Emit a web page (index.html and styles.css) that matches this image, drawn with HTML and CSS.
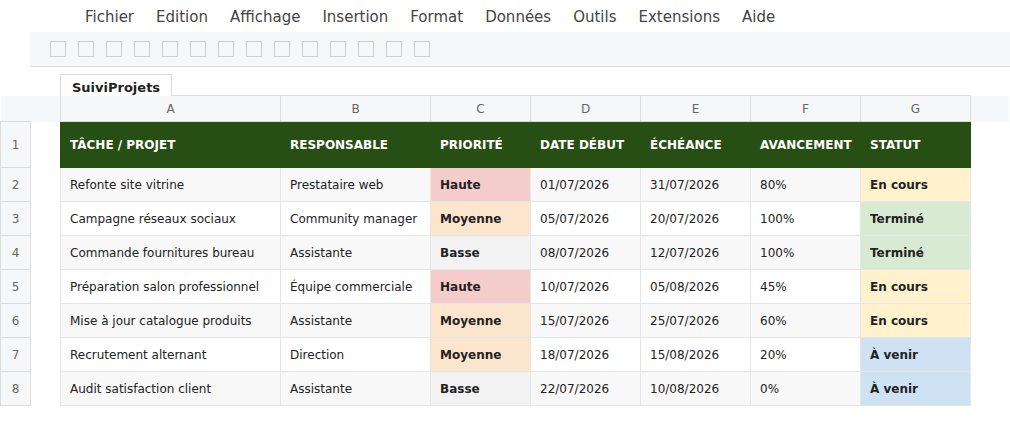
FILE: index.html
```html
<!DOCTYPE html>
<html lang="fr">
<head>
    <meta charset="UTF-8">
    <title>SuiviProjets</title>
    <link rel="stylesheet" href="styles.css">
</head>
<body>
    <div class="menubar">
        <span>Fichier</span>
        <span>Edition</span>
        <span>Affichage</span>
        <span>Insertion</span>
        <span>Format</span>
        <span>Données</span>
        <span>Outils</span>
        <span>Extensions</span>
        <span>Aide</span>
    </div>

    <div class="toolbar">
        <span class="tool"></span><span class="tool"></span><span class="tool"></span><span class="tool"></span>
        <span class="tool"></span><span class="tool"></span><span class="tool"></span><span class="tool"></span>
        <span class="tool"></span><span class="tool"></span><span class="tool"></span><span class="tool"></span>
        <span class="tool"></span><span class="tool"></span>
    </div>

    <div class="tabs">
        <div class="tab">SuiviProjets</div>
    </div>

    <table class="sheet">
        <colgroup>
            <col class="c-rowhead">
            <col class="c-gap">
            <col class="c-a">
            <col class="c-b">
            <col class="c-c">
            <col class="c-d">
            <col class="c-e">
            <col class="c-f">
            <col class="c-g">
            <col>
        </colgroup>
        <tr class="col-heads">
            <td class="blank"></td>
            <td class="blank"></td>
            <td class="col-head">A</td>
            <td class="col-head">B</td>
            <td class="col-head">C</td>
            <td class="col-head">D</td>
            <td class="col-head">E</td>
            <td class="col-head">F</td>
            <td class="col-head">G</td>
            <td class="blank"></td>
        </tr>
        <tr class="title-row">
            <td class="row-head">1</td>
            <td class="gap"></td>
            <td>TÂCHE / PROJET</td>
            <td>RESPONSABLE</td>
            <td>PRIORITÉ</td>
            <td>DATE DÉBUT</td>
            <td>ÉCHÉANCE</td>
            <td>AVANCEMENT</td>
            <td>STATUT</td>
            <td class="gap"></td>
        </tr>
        <tr class="odd">
            <td class="row-head">2</td>
            <td class="gap"></td>
            <td>Refonte site vitrine</td>
            <td>Prestataire web</td>
            <td class="prio haute">Haute</td>
            <td>01/07/2026</td>
            <td>31/07/2026</td>
            <td>80%</td>
            <td class="statut en-cours">En cours</td>
            <td class="gap"></td>
        </tr>
        <tr>
            <td class="row-head">3</td>
            <td class="gap"></td>
            <td>Campagne réseaux sociaux</td>
            <td>Community manager</td>
            <td class="prio moyenne">Moyenne</td>
            <td>05/07/2026</td>
            <td>20/07/2026</td>
            <td>100%</td>
            <td class="statut termine">Terminé</td>
            <td class="gap"></td>
        </tr>
        <tr class="odd">
            <td class="row-head">4</td>
            <td class="gap"></td>
            <td>Commande fournitures bureau</td>
            <td>Assistante</td>
            <td class="prio basse">Basse</td>
            <td>08/07/2026</td>
            <td>12/07/2026</td>
            <td>100%</td>
            <td class="statut termine">Terminé</td>
            <td class="gap"></td>
        </tr>
        <tr>
            <td class="row-head">5</td>
            <td class="gap"></td>
            <td>Préparation salon professionnel</td>
            <td>Équipe commerciale</td>
            <td class="prio haute">Haute</td>
            <td>10/07/2026</td>
            <td>05/08/2026</td>
            <td>45%</td>
            <td class="statut en-cours">En cours</td>
            <td class="gap"></td>
        </tr>
        <tr class="odd">
            <td class="row-head">6</td>
            <td class="gap"></td>
            <td>Mise à jour catalogue produits</td>
            <td>Assistante</td>
            <td class="prio moyenne">Moyenne</td>
            <td>15/07/2026</td>
            <td>25/07/2026</td>
            <td>60%</td>
            <td class="statut en-cours">En cours</td>
            <td class="gap"></td>
        </tr>
        <tr>
            <td class="row-head">7</td>
            <td class="gap"></td>
            <td>Recrutement alternant</td>
            <td>Direction</td>
            <td class="prio moyenne">Moyenne</td>
            <td>18/07/2026</td>
            <td>15/08/2026</td>
            <td>20%</td>
            <td class="statut a-venir">À venir</td>
            <td class="gap"></td>
        </tr>
        <tr class="odd">
            <td class="row-head">8</td>
            <td class="gap"></td>
            <td>Audit satisfaction client</td>
            <td>Assistante</td>
            <td class="prio basse">Basse</td>
            <td>22/07/2026</td>
            <td>10/08/2026</td>
            <td>0%</td>
            <td class="statut a-venir">À venir</td>
            <td class="gap"></td>
        </tr>
    </table>
</body>
</html>
```

FILE: styles.css
```css
body {
    margin: 0;
    font-family: 'DejaVu Sans', sans-serif;
    color: #222;
    background: white;
}

.menubar {
    display: flex;
    gap: 22px;
    height: 32px;
    align-items: center;
    padding-left: 85px;
    padding-top: 2px;
    box-sizing: border-box;
    font-size: 15px;
    color: #444;
}

.toolbar {
    display: flex;
    gap: 12px;
    align-items: center;
    margin-left: 30px;
    height: 34px;
    padding-left: 20px;
    background: #f6f7f9;
    border-bottom: 1px solid #dcdcdc;
}

.tool {
    width: 14px;
    height: 14px;
    border: 1px solid #cfcfcf;
}

.tabs {
    padding-left: 60px;
    padding-top: 7px;
    height: 21px;
}

.tab {
    display: inline-block;
    height: 21px;
    line-height: 25px;
    padding: 0 11px;
    border: 1px solid #dcdcdc;
    border-bottom: none;
    font-size: 13px;
    font-weight: bold;
    background: white;
}

.sheet {
    border-collapse: collapse;
    table-layout: fixed;
    width: 1010px;
    font-size: 12px;
}

.c-rowhead { width: 30px; }
.c-gap { width: 30px; }
.c-a { width: 220px; }
.c-b { width: 150px; }
.c-c { width: 100px; }
.c-d { width: 110px; }
.c-e { width: 110px; }
.c-f { width: 110px; }
.c-g { width: 110px; }

.sheet td {
    height: 33px;
    padding: 0 0 0 9px;
    border: 1px solid #e6e6e6;
    white-space: nowrap;
    overflow: hidden;
}

.sheet td.gap {
    border: none;
    background: white;
    padding: 0;
}

.col-heads td {
    height: 25px;
    background: #f6f7f9;
}

.col-heads td.blank {
    border: none;
    padding: 0;
}

.col-heads td.col-head {
    border: 1px solid #dcdcdc;
    padding: 0;
    text-align: center;
    color: #666;
}

.title-row td {
    height: 44px;
    padding-top: 1px;
    background: #274e13;
    border-color: #274e13;
    color: white;
    font-weight: bold;
}

.sheet td.row-head {
    padding: 0;
    text-align: center;
    font-weight: normal;
    color: #666;
    background: #f6f7f9;
    border: 1px solid #dcdcdc;
}

.odd td {
    background: #f8f8f8;
}

.sheet td.prio,
.sheet td.statut {
    font-weight: bold;
}

.sheet td.haute { background: #f4cccc; }
.sheet td.moyenne { background: #fce5cd; }
.sheet td.basse { background: #f3f3f3; }
.sheet td.en-cours { background: #fff2cc; }
.sheet td.termine { background: #d9ead3; }
.sheet td.a-venir { background: #cfe2f3; }
```
